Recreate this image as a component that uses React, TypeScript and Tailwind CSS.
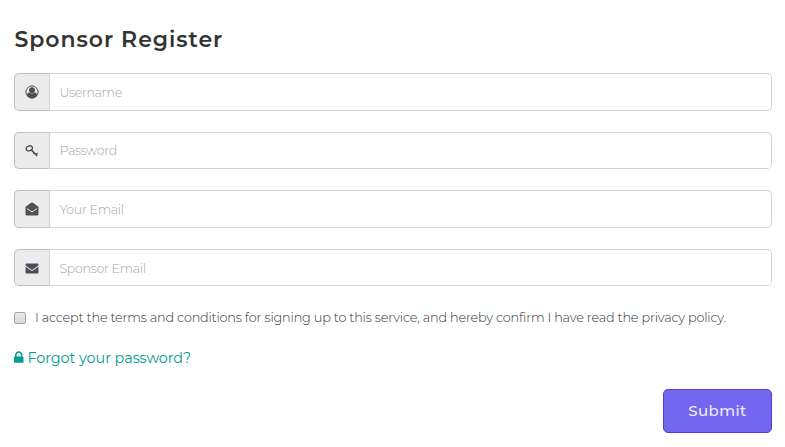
import React from "react";

function UserIcon() {
  return (
    <svg viewBox="0 0 1792 1792" className="size-[14px]" fill="currentColor">
      <path d="M1560 1339q-22-155-87.5-257.5t-204.5-118.5q-67 74-170 95t-202 21-202-21-170-95q-139 16-204.5 118.5t-87.5 257.5q106 170 308 257.5t356 87.5 356-87.5 308-257.5z" />
      <circle cx="896" cy="680" r="384" />
      <circle cx="896" cy="896" r="780" fill="none" stroke="currentColor" strokeWidth="128" />
    </svg>
  );
}

function KeyIcon() {
  return (
    <svg viewBox="0 0 14 14" className="size-[14px]" fill="none" stroke="currentColor">
      <ellipse cx="4.3" cy="4.4" rx="3.2" ry="2.4" strokeWidth="1.4" transform="rotate(-20 4.3 4.4)" />
      <path d="M6 5.6 12.2 11.9" strokeWidth="1.5" />
      <path d="M9.4 9.1 8.5 10.2M12.7 9 10.6 10.8" strokeWidth="1.3" />
    </svg>
  );
}

function OpenMailIcon() {
  return (
    <svg viewBox="0 0 14 14" className="size-[14px]">
      <path d="M.5 5.2Q.5 4.8.9 4.5L5.7 1Q7 .1 8.3 1l4.8 3.5q.4.3.4.7v7.3q0 1-1 1H1.5q-1 0-1-1z" fill="currentColor" />
      <path d="M2 6.6 5.8 9.2Q7 10 8.2 9.2L12 6.6" fill="none" stroke="#ececec" strokeWidth="1" />
    </svg>
  );
}

function MailIcon() {
  return (
    <svg viewBox="0 0 14 14" className="size-[14px] translate-y-[0.5px]" fill="currentColor">
      <path d="M.5 3.1q0-1.1 1.1-1.1h10.8q1.1 0 1.1 1.1 0 .8-1 1.6L8 7.9q-1 .7-2 0L1.5 4.7q-1-.8-1-1.6z" />
      <path d="M.5 5.2 5.6 8.8q1.4 1 2.8 0l5.1-3.6V11q0 1.1-1.1 1.1H1.6Q.5 12.1.5 11z" />
    </svg>
  );
}

function LockIcon() {
  return (
    <svg viewBox="320 128 1152 1408" className="h-[12px] w-[9.5px] -translate-y-px" fill="currentColor">
      <path d="M640 768h512v-192q0-106-75-181t-181-75-181 75-75 181v192zm832 96v576q0 40-28 68t-68 28h-960q-40 0-68-28t-28-68v-576q0-40 28-68t68-28h32v-192q0-184 132-316t316-132 316 132 132 316v192h32q40 0 68 28t28 68z" />
    </svg>
  );
}

type FieldProps = { icon: React.ReactNode; label: string; className: string; textClass: string };

function Field({ icon, label, className, textClass }: FieldProps) {
  return (
    <div className={`flex ${className}`}>
      <div className="flex w-[36px] shrink-0 items-center justify-center rounded-l-[5px] border border-[#bfbfbf] border-r-[#cfcfcf] bg-[#ececec] text-[#495057]">
        {icon}
      </div>
      <div className={`flex grow items-center rounded-r-[5px] border border-l-0 border-[#d5d5d5] pl-[9.5px] text-[12.6px] font-light text-[#a3a6a9] ${textClass}`}>
        <span>{label}</span>
      </div>
    </div>
  );
}

export default function App() {
  return (
    <form className="h-[447px] w-[785px] overflow-hidden bg-white pr-[13px] pl-[14px] font-[Montserrat,Inter,sans-serif]">
      <h1 className="pt-[25px] pl-[0.5px] text-[22px] leading-[30px] font-semibold tracking-[0.95px] whitespace-nowrap text-[#333333]">
        Sponsor Register
      </h1>
      <div className="mt-[18px] flex flex-col gap-[21px]">
        <Field icon={<UserIcon />} label="Username" className="h-[38px]" textClass="pt-[2px] tracking-[-0.35px]" />
        <Field icon={<KeyIcon />} label="Password" className="h-[37px]" textClass="pt-[2px] tracking-[-0.3px]" />
        <Field icon={<OpenMailIcon />} label="Your Email" className="h-[38px]" textClass="pt-[2px] tracking-[-0.3px]" />
        <Field icon={<MailIcon />} label="Sponsor Email" className="h-[37px]" textClass="pt-[4px] tracking-[-0.3px]" />
      </div>
      <label className="mt-[22px] flex h-5 items-center">
        <span className="size-3 shrink-0 rounded-[2px] border border-[#a6a6a6] bg-linear-to-b from-[#e8e8e8] to-[#d9d9d9]" />
        <span className="ml-[9px] text-[12.8px] leading-5 font-light tracking-[-0.18px] whitespace-nowrap text-[#303438]">
          I accept the terms and conditions for signing up to this service, and hereby confirm I have read the privacy policy.
        </span>
      </label>
      <a className="mt-[19px] flex h-[22px] items-center text-[#009e8c]">
        <LockIcon />
        <span className="ml-[4px] text-[14.4px] leading-[22px] font-normal tracking-[-0.06px] whitespace-nowrap">Forgot your password?</span>
      </a>
      <div className="mt-5 flex justify-end">
        <button type="button" className="h-[44px] w-[109px] rounded-[5px] border border-[#4e3de3] bg-[#7367f0] text-[15px] font-medium tracking-[0.4px] text-[#eeecff]">
          Submit
        </button>
      </div>
    </form>
  );
}
